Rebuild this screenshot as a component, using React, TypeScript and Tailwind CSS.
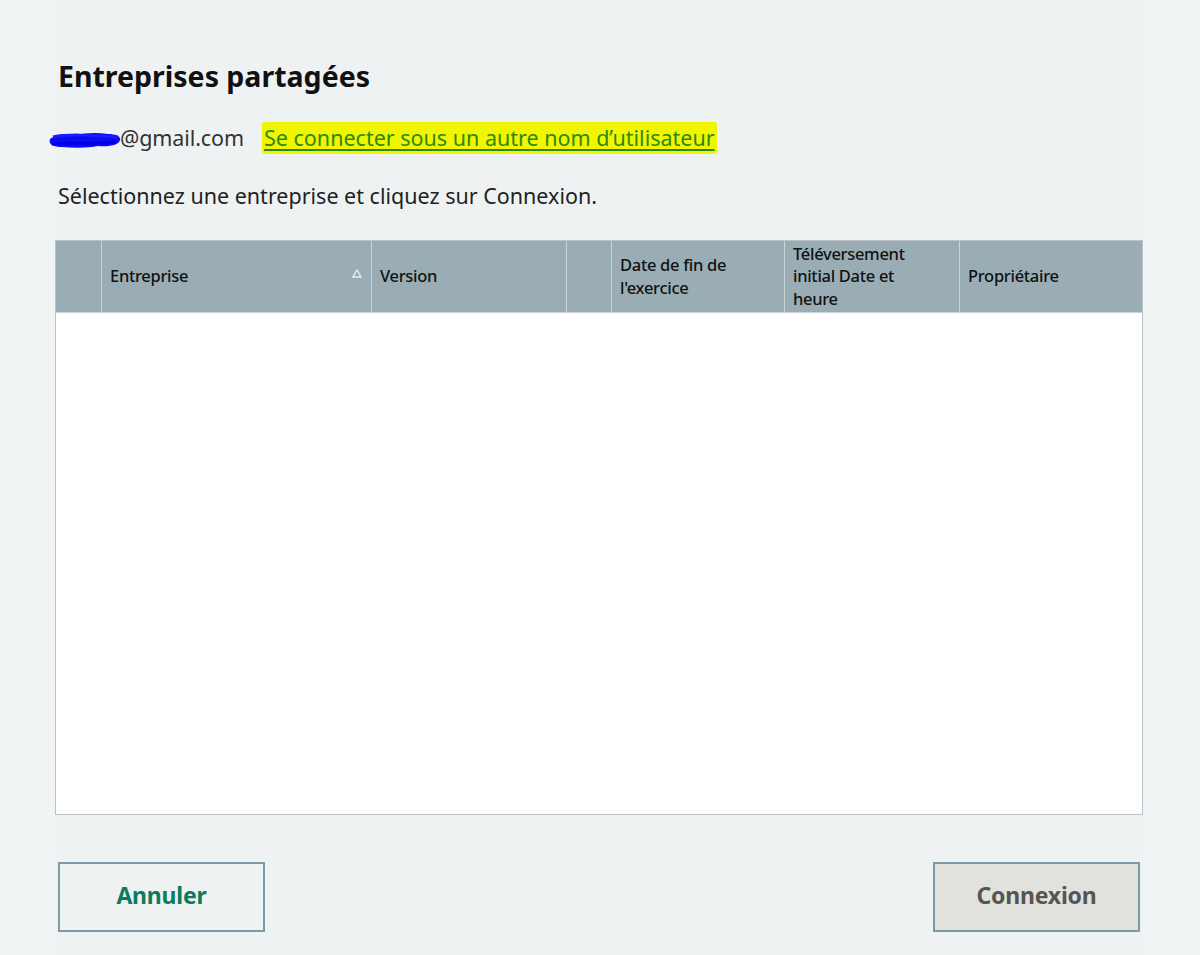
import React from 'react';

const columns = [
  { label: 'Entreprise', width: 'w-[270px]', sort: true },
  { label: 'Version', width: 'w-[195px]' },
  { label: '', width: 'w-[45px]' },
  { label: "Date de fin de\nl'exercice", width: 'w-[173px]' },
  { label: 'Téléversement\ninitial Date et\nheure', width: 'w-[175px]' },
  { label: 'Propriétaire', width: 'flex-1' },
];

function Scribble() {
  return (
    <svg width="74" height="22" viewBox="0 0 74 22" className="shrink-0 -mr-[2px] mt-[4px]">
      <path
        d="M2 10 C8 5, 18 4, 28 6 C36 4, 48 3, 60 5 C67 5, 73 7, 72 11 C71 16, 62 18, 50 17 C40 19, 26 19, 14 18 C6 18, 0 16, 2 10 Z"
        fill="#0a0af5"
      />
      <path d="M5 8 C20 5, 40 6, 70 8" stroke="#1a1aff" strokeWidth="3" fill="none" />
      <path d="M4 15 C25 13, 45 16, 68 13" stroke="#0000e8" strokeWidth="3" fill="none" />
    </svg>
  );
}

export default function App() {
  return (
    <div
      className="w-[1200px] h-[955px] bg-[#f1f4f5] flex overflow-hidden"
      style={{ fontFamily: '"Noto Sans", "Open Sans", sans-serif' }}
    >
      <div className="w-[55px] shrink-0" />
      <div className="w-[1088px] shrink-0 flex flex-col bg-[#eef2f3]">
        <h1 className="mt-[56px] ml-[3px] text-[28.5px] leading-[40px] font-bold text-[#111]">
          Entreprises partagées
        </h1>

        <div className="mt-[27px] flex items-center h-[30px] -ml-[7px]">
          <Scribble />
          <span className="text-[21.5px] text-[#333] tracking-[-0.1px]">@gmail.com</span>
          <a
            href="#"
            className="ml-[18px] px-[2px] py-[1px] bg-[#f2f500] text-[21.5px] leading-[30px] text-[#2c8a12] underline underline-offset-[3px] decoration-[#2c8a12] rounded-[3px]"
          >
            Se connecter sous un autre nom d’utilisateur
          </a>
        </div>

        <p className="mt-[30px] ml-[3px] text-[21.5px] leading-[26px] text-[#222]">
          Sélectionnez une entreprise et cliquez sur Connexion.
        </p>

        <div className="mt-[31px] h-[575px] border border-[#bcc3c8] bg-white flex flex-col">
          <div className="h-[72px] bg-[#9aadb5] flex border-b border-[#c8d3d8]">
            <div className="w-[46px] border-r border-[#c9d5da]" />
            {columns.map((col, i) => (
              <div
                key={i}
                className={`${col.width} shrink-0 border-r border-[#c9d5da] last:border-r-0 flex items-center pl-[8px] pr-[9px]`}
              >
                <span className="flex-1 whitespace-pre-line text-[16.5px] leading-[22.5px] text-[#111] font-medium tracking-[-0.3px]">
                  {col.label}
                </span>
                {col.sort && (
                  <svg width="10" height="9" viewBox="0 0 10 9" className="mb-[6px]">
                    <path d="M5 1 L9 8 L1 8 Z" fill="none" stroke="#e6ecef" strokeWidth="1.4" />
                  </svg>
                )}
              </div>
            ))}
          </div>
          <div className="flex-1 bg-white" />
        </div>

        <div className="mt-[47px] flex justify-between px-[3px]">
          <button className="w-[207px] h-[70px] pb-[3px] border-2 border-[#7b9ba6] bg-[#eef2f3] text-[23px] font-bold text-[#0b7c5c] tracking-[-0.2px]">
            Annuler
          </button>
          <button className="w-[207px] h-[70px] pb-[3px] border-2 border-[#7b9ba6] bg-[#e1e1dd] text-[23px] font-bold text-[#555] tracking-[-0.2px]">
            Connexion
          </button>
        </div>
      </div>
      <div className="flex-1 bg-[#f1f4f5]" />
    </div>
  );
}
